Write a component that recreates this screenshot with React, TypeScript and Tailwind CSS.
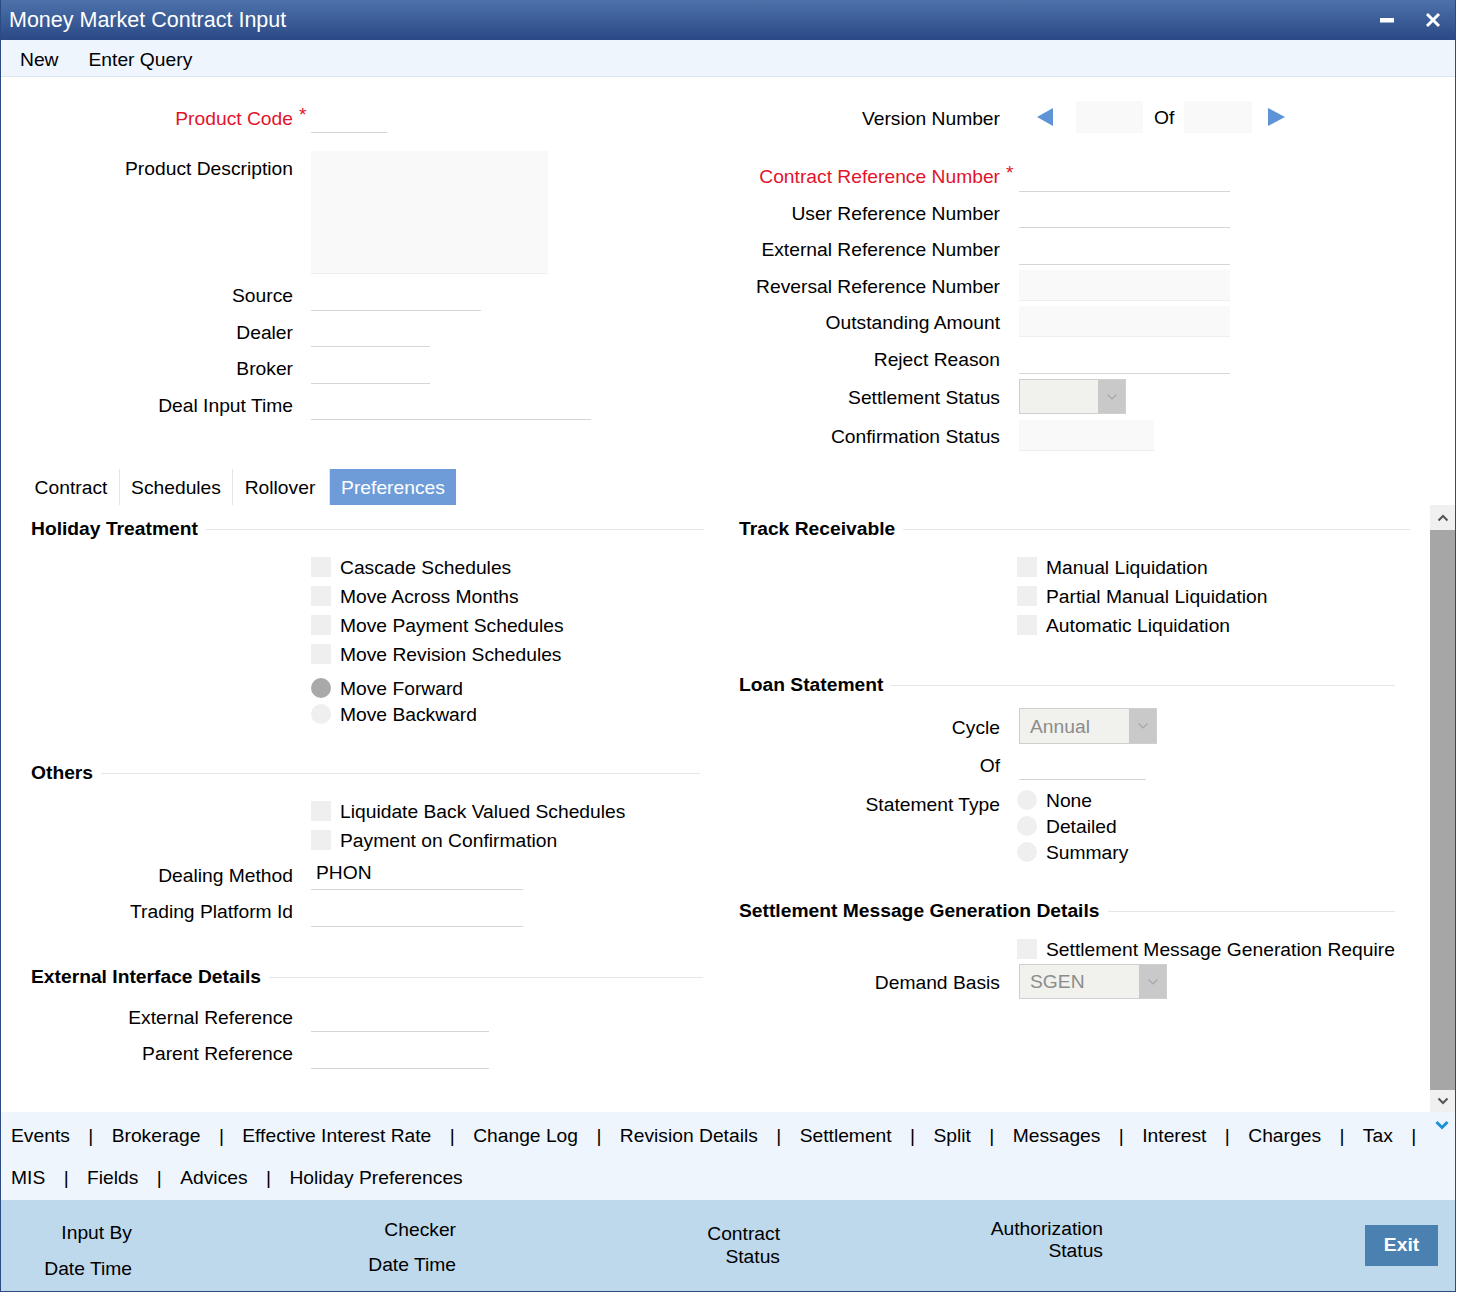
import React from "react";

const Check = () => <span className="block h-[20px] w-[20px] shrink-0 bg-[#efefef]" />;

const Radio = ({ on }: { on?: boolean }) => (
  <span
    className={
      on
        ? "block h-[20px] w-[20px] shrink-0 rounded-full bg-[#a9a9a9]"
        : "block h-[20px] w-[20px] shrink-0 rounded-full bg-[#efefef]"
    }
  />
);

const SelectChevron = () => (
  <svg width="12" height="8" viewBox="0 0 12 8">
    <path d="M1.5 1.5 6 6 10.5 1.5" fill="none" stroke="#a8a8a8" strokeWidth="1.2" />
  </svg>
);

function Select({ value, w, h }: { value?: string; w: string; h: string }) {
  return (
    <div className={`flex border border-[#cfcfcf] bg-[#f1f1ed] ${w} ${h}`}>
      <span className="flex flex-1 items-center pl-[10px] pt-[2px] text-[#8c8c8c]">{value}</span>
      <span className="flex w-[27px] items-center justify-center bg-[#c9c9c9]">
        <SelectChevron />
      </span>
    </div>
  );
}

const Line = ({ w }: { w: string }) => <div className={`h-[32px] border-b border-[#d6d6d6] ${w}`} />;
const Fill = ({ w, h }: { w: string; h: string }) => (
  <div className={`border-b border-[#eeeeee] bg-[#f9f9f9] ${w} ${h}`} />
);

function Star() {
  return <span className="absolute left-[calc(100%+6px)] top-[0px] text-[#e3132c]">*</span>;
}

function LRow({ label, red, children }: { label: string; red?: boolean; children?: React.ReactNode }) {
  return (
    <div className="flex h-[36.5px] items-center">
      <div className={red ? "relative w-[292px] pt-[4px] text-right text-[#e3132c]" : "w-[292px] pt-[4px] text-right"}>
        {label}
        {red && <Star />}
      </div>
      <div className="ml-[18px]">{children}</div>
    </div>
  );
}

function RRow({ label, red, h, children }: { label: string; red?: boolean; h?: string; children?: React.ReactNode }) {
  return (
    <div className={`flex items-center ${h ?? "h-[36.5px]"}`}>
      <div className={red ? "relative w-[300px] pt-[4px] text-right text-[#e3132c]" : "w-[300px] pt-[4px] text-right"}>
        {label}
        {red && <Star />}
      </div>
      <div className="ml-[19px]">{children}</div>
    </div>
  );
}

function Section({ title, cls }: { title: string; cls: string }) {
  return (
    <div className={`flex h-[24px] items-center font-bold ${cls}`}>
      <span className="pt-[1px]">{title}</span>
      <span className="ml-[8px] h-px flex-1 bg-[#e6e6e6]" />
    </div>
  );
}

function CheckRow({ label, indent }: { label: string; indent: string }) {
  return (
    <div className={`flex h-[29px] items-center ${indent}`}>
      <Check />
      <span className="ml-[9px] pt-[2px]">{label}</span>
    </div>
  );
}

function RadioRow({ label, on, indent }: { label: string; on?: boolean; indent: string }) {
  return (
    <div className={`flex h-[26px] items-center ${indent}`}>
      <Radio on={on} />
      <span className="ml-[9px] pt-[2px]">{label}</span>
    </div>
  );
}

function LinkRow({ items, trailing }: { items: string[]; trailing?: boolean }) {
  return (
    <div className="flex h-[42px] shrink-0 items-center whitespace-nowrap pl-[10px] pt-[2px]">
      {items.map((t, i) => (
        <React.Fragment key={t}>
          {i > 0 && <span className="px-[18.4px]">|</span>}
          <span>{t}</span>
        </React.Fragment>
      ))}
      {trailing && <span className="px-[18.4px]">|</span>}
    </div>
  );
}

export default function App() {
  return (
    <div className="h-[1294px] w-[1460px] bg-white font-['Liberation_Sans',Arial,sans-serif] text-[19.25px] text-black">
      <div className="flex h-[1292px] w-[1456px] flex-col border-x border-b border-[#2c4b84]">
        {/* title bar */}
        <div className="flex h-[40px] items-center bg-[linear-gradient(to_bottom,#4d72aa,#2a4986)] pl-[8px] text-white">
          <span className="text-[21.5px]">Money Market Contract Input</span>
          <svg className="ml-auto" width="14" height="5" viewBox="0 0 14 5">
            <rect width="14" height="4.5" fill="#fff" />
          </svg>
          <svg className="ml-[31px] mr-[14px]" width="16" height="16" viewBox="0 0 16 16">
            <path d="M2 2 14 14M14 2 2 14" stroke="#fff" strokeWidth="3" />
          </svg>
        </div>

        {/* toolbar */}
        <div className="flex h-[37px] items-center gap-[30px] whitespace-nowrap border-b border-[#dde7f0] bg-[#eef5fd] pl-[19px] pt-[5px]">
          <span>New</span>
          <span>Enter Query</span>
        </div>

        {/* header fields */}
        <div className="flex h-[392px]">
          <div className="w-[699px] pt-[22px]">
            <LRow label="Product Code" red>
              <Line w="w-[76px]" />
            </LRow>
            <div className="mt-[15.5px] flex">
              <div className="w-[292px] pt-[2px] text-right leading-[32px]">Product Description</div>
              <div className="ml-[18px] h-[123px] w-[237px] border-b border-[#eeeeee] bg-[#f9f9f9]" />
            </div>
            <div className="mt-[2.5px]">
              <LRow label="Source">
                <Line w="w-[170px]" />
              </LRow>
              <LRow label="Dealer">
                <Line w="w-[119px]" />
              </LRow>
              <LRow label="Broker">
                <Line w="w-[119px]" />
              </LRow>
              <LRow label="Deal Input Time">
                <Line w="w-[280px]" />
              </LRow>
            </div>
          </div>

          <div className="flex-1 pt-[22px]">
            <div className="flex h-[36.5px] items-center">
              <div className="w-[300px] pt-[4px] text-right">Version Number</div>
              <svg className="ml-[37px]" width="16" height="18" viewBox="0 0 16 18">
                <path d="M16 0V18L0 9Z" fill="#5f93d7" />
              </svg>
              <div className="ml-[23px] h-[32px] w-[67px] bg-[#f9f9f9]" />
              <span className="ml-[11px] pt-[2px]">Of</span>
              <div className="ml-[10px] h-[32px] w-[68px] bg-[#f9f9f9]" />
              <svg className="ml-[16px]" width="17" height="18" viewBox="0 0 17 18">
                <path d="M0 0V18L17 9Z" fill="#5f93d7" />
              </svg>
            </div>
            <div className="mt-[22px]">
              <RRow label="Contract Reference Number" red>
                <Line w="w-[211px]" />
              </RRow>
              <RRow label="User Reference Number">
                <Line w="w-[211px]" />
              </RRow>
              <RRow label="External Reference Number">
                <Line w="w-[211px]" />
              </RRow>
              <RRow label="Reversal Reference Number">
                <Fill w="w-[211px]" h="h-[31px]" />
              </RRow>
              <RRow label="Outstanding Amount">
                <Fill w="w-[211px]" h="h-[31px]" />
              </RRow>
              <RRow label="Reject Reason">
                <Line w="w-[211px]" />
              </RRow>
              <RRow label="Settlement Status" h="h-[40px]">
                <Select w="w-[107px]" h="h-[35px]" />
              </RRow>
              <RRow label="Confirmation Status" h="h-[38px]">
                <Fill w="w-[135px]" h="h-[31px]" />
              </RRow>
            </div>
          </div>
        </div>

        {/* tabs */}
        <div className="flex h-[36px] pl-[22px]">
          <div className="flex w-[96px] items-center justify-center pt-[2px]">Contract</div>
          <div className="flex w-[113px] items-center justify-center border-l border-[#e3e3e3] pt-[2px]">Schedules</div>
          <div className="flex w-[95px] items-center justify-center border-l border-[#e3e3e3] pt-[2px]">Rollover</div>
          <div className="ml-[2px] flex w-[127px] items-center justify-center border-l border-[#e3e3e3] bg-[#6e9cd9] pt-[2px] text-white">
            Preferences
          </div>
        </div>

        {/* scroll content */}
        <div className="flex h-[607px]">
          <div className="flex w-[1429px]">
            <div className="w-[699px] pt-[12px]">
              <Section title="Holiday Treatment" cls="pl-[30px] mr-[-4px]" />
              <div className="mt-[11.5px]">
                <CheckRow indent="pl-[310px]" label="Cascade Schedules" />
                <CheckRow indent="pl-[310px]" label="Move Across Months" />
                <CheckRow indent="pl-[310px]" label="Move Payment Schedules" />
                <CheckRow indent="pl-[310px]" label="Move Revision Schedules" />
              </div>
              <div className="mt-[6.5px]">
                <RadioRow indent="pl-[310px]" label="Move Forward" on />
                <RadioRow indent="pl-[310px]" label="Move Backward" />
              </div>
              <div className="mt-[34px]">
                <Section title="Others" cls="pl-[30px]" />
              </div>
              <div className="mt-[11.5px]">
                <CheckRow indent="pl-[310px]" label="Liquidate Back Valued Schedules" />
                <CheckRow indent="pl-[310px]" label="Payment on Confirmation" />
              </div>
              <div className="mt-[1.25px]">
                <LRow label="Dealing Method">
                  <div className="h-[32px] w-[212px] border-b border-[#d6d6d6] pl-[5px] leading-[30px]">PHON</div>
                </LRow>
                <LRow label="Trading Platform Id">
                  <Line w="w-[212px]" />
                </LRow>
              </div>
              <div className="mt-[36.25px]">
                <Section title="External Interface Details" cls="pl-[30px] mr-[-3px]" />
              </div>
              <div className="mt-[8.75px]">
                <LRow label="External Reference">
                  <Line w="w-[178px]" />
                </LRow>
                <LRow label="Parent Reference">
                  <Line w="w-[178px]" />
                </LRow>
              </div>
            </div>

            <div className="w-[710px] pt-[12px]">
              <Section title="Track Receivable" cls="pl-[39px]" />
              <div className="mt-[11.5px]">
                <CheckRow indent="pl-[317px]" label="Manual Liquidation" />
                <CheckRow indent="pl-[317px]" label="Partial Manual Liquidation" />
                <CheckRow indent="pl-[317px]" label="Automatic Liquidation" />
              </div>
              <div className="mt-[33.5px]">
                <Section title="Loan Statement" cls="pl-[39px] mr-[15px]" />
              </div>
              <div className="mt-[10px]">
                <RRow label="Cycle" h="h-[38px]">
                  <Select value="Annual" w="w-[138px]" h="h-[36px]" />
                </RRow>
              </div>
              <div className="mt-[0.75px]">
                <RRow label="Of">
                  <Line w="w-[127px]" />
                </RRow>
              </div>
              <div className="mt-[4.75px] flex">
                <div className="w-[300px] pt-[3px] text-right leading-[30px]">Statement Type</div>
                <div className="ml-[17px]">
                  <RadioRow indent="" label="None" />
                  <RadioRow indent="" label="Detailed" />
                  <RadioRow indent="" label="Summary" />
                </div>
              </div>
              <div className="mt-[34px]">
                <Section title="Settlement Message Generation Details" cls="pl-[39px] mr-[15px]" />
              </div>
              <div className="mt-[11.5px]">
                <CheckRow indent="pl-[317px]" label="Settlement Message Generation Require" />
              </div>
              <RRow label="Demand Basis" h="h-[36px]">
                <Select value="SGEN" w="w-[148px]" h="h-[35px]" />
              </RRow>
            </div>
          </div>

          {/* scrollbar */}
          <div className="flex w-[25px] flex-col">
            <div className="flex h-[25px] items-center justify-center bg-[#f0f0f0]">
              <svg width="12" height="8" viewBox="0 0 12 8">
                <path d="M1.5 6.5 6 2 10.5 6.5" fill="none" stroke="#555" strokeWidth="2" />
              </svg>
            </div>
            <div className="flex-1 bg-[#a6a6a6]" />
            <div className="flex h-[22px] items-center justify-center bg-[#f0f0f0]">
              <svg width="12" height="8" viewBox="0 0 12 8">
                <path d="M1.5 1.5 6 6 10.5 1.5" fill="none" stroke="#555" strokeWidth="2" />
              </svg>
            </div>
          </div>
        </div>

        {/* link bar */}
        <div className="h-[88px] bg-[#eef5fd] pt-[2px]">
          <div className="flex">
            <LinkRow
              items={[
                "Events",
                "Brokerage",
                "Effective Interest Rate",
                "Change Log",
                "Revision Details",
                "Settlement",
                "Split",
                "Messages",
                "Interest",
                "Charges",
                "Tax",
              ]}
              trailing
            />
            <svg className="ml-auto mr-[10px] mt-[6px] shrink-0" width="14" height="10" viewBox="0 0 14 10">
              <path d="M1.5 2 7 7.5 12.5 2" fill="none" stroke="#1e90d6" strokeWidth="3" />
            </svg>
          </div>
          <LinkRow items={["MIS", "Fields", "Advices", "Holiday Preferences"]} />
        </div>

        {/* footer */}
        <div className="flex h-[91px] bg-[#bed8ec]">
          <div className="w-[131px] pt-[15px] text-right leading-[36px]">
            <div>Input By</div>
            <div>Date Time</div>
          </div>
          <div className="w-[324px] pt-[11.5px] text-right leading-[35px]">
            <div>Checker</div>
            <div>Date Time</div>
          </div>
          <div className="w-[324px] pt-[21.5px] text-right leading-[23px]">
            <div>Contract</div>
            <div>Status</div>
          </div>
          <div className="w-[323px] pt-[18px] text-right leading-[22px]">
            <div>Authorization</div>
            <div>Status</div>
          </div>
          <div className="ml-[262px] mt-[25px] flex h-[41px] w-[73px] items-center justify-center bg-[#4b81b1] font-bold text-white">
            Exit
          </div>
        </div>
      </div>
    </div>
  );
}
